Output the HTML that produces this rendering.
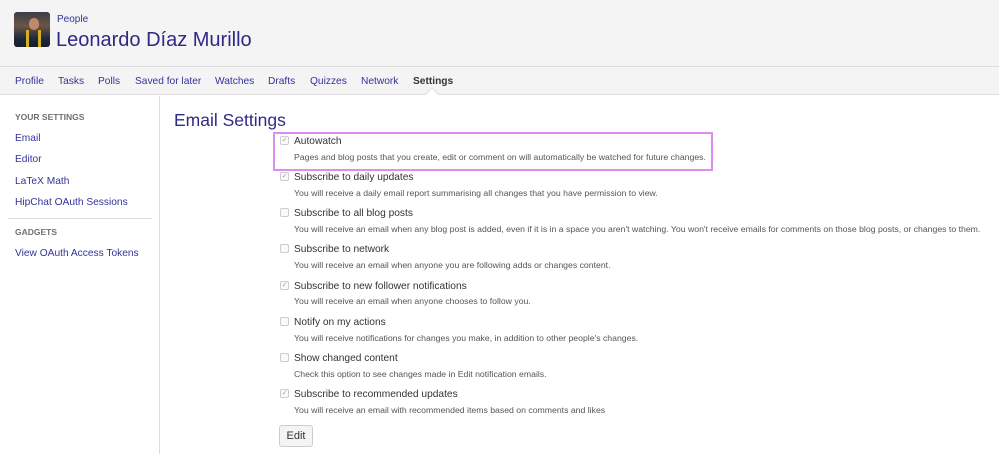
<!DOCTYPE html>
<html><head><meta charset="utf-8"><style>
*{margin:0;padding:0;box-sizing:border-box}
body{width:999px;height:454px;overflow:hidden;background:#fff;font-family:"Liberation Sans",Arial,sans-serif;position:relative}
.a{position:absolute;white-space:nowrap}
#hdr{position:absolute;left:0;top:0;width:999px;height:67px;background:#f4f4f4;border-bottom:1px solid #ddd}
#nav{position:absolute;left:0;top:67px;width:999px;height:28px;background:#f4f4f4;border-bottom:1px solid #ddd}
#nav span{position:absolute;top:9px;font-size:10.2px;color:#333399}
#side{position:absolute;left:0;top:96px;width:160px;height:358px;border-right:1px solid #ddd}
.sh{font-size:8.5px;font-weight:bold;color:#707070;left:15px}
.sl{font-size:10.2px;color:#333399;left:15px}
.lb{font-size:10.2px;color:#333;left:294px;margin-top:2px}
.ds{font-size:8.7px;color:#555;left:294px}
.cb{position:absolute;left:280px;width:9px;height:9px;border:1px solid #ccc;border-radius:2px;background:#fafafa;font-size:7px;color:#999;line-height:7px;text-align:center;margin-top:1px}
</style></head><body>
<div id="hdr"></div>
<div class="a" style="left:14px;top:12px;width:36px;height:35px;border-radius:3px;background:linear-gradient(180deg,#3a3f48 0%,#6b5446 40%,#1f2a3a 75%,#141d2c 100%)"></div>
<div class="a" style="left:29px;top:18px;width:10px;height:12px;border-radius:5px;background:#c08a6a"></div>
<div class="a" style="left:26px;top:30px;width:3px;height:17px;background:#d4b020"></div>
<div class="a" style="left:38px;top:30px;width:3px;height:17px;background:#d4b020"></div>
<div class="a" style="left:57px;top:14px;font-size:10px;color:#333399">People</div>
<div class="a" style="left:56px;top:29px;font-size:20px;color:#2d2a85">Leonardo Díaz Murillo</div>
<div id="nav">
<span style="left:15px">Profile</span><span style="left:58px">Tasks</span><span style="left:98px">Polls</span><span style="left:135px">Saved for later</span><span style="left:215px">Watches</span><span style="left:268px">Drafts</span><span style="left:310px">Quizzes</span><span style="left:361px">Network</span><span style="left:413px;color:#333;font-weight:bold">Settings</span>
<div class="a" style="left:427px;top:22px;width:10px;height:10px;background:#fff;border-left:1px solid #ddd;border-top:1px solid #ddd;transform:rotate(45deg)"></div>
</div>
<div id="side"></div>
<div class="a sh" style="top:112px">YOUR SETTINGS</div>
<div class="a sl" style="top:133px">Email</div>
<div class="a sl" style="top:154px">Editor</div>
<div class="a sl" style="top:176px">LaTeX Math</div>
<div class="a sl" style="top:197px">HipChat OAuth Sessions</div>
<div class="a" style="left:8px;top:218px;width:144px;height:1px;background:#ddd"></div>
<div class="a sh" style="top:227px">GADGETS</div>
<div class="a sl" style="top:248px">View OAuth Access Tokens</div>
<div class="a" style="left:174px;top:110px;font-size:17.5px;color:#2d2a85">Email Settings</div>
<div class="a" style="left:273px;top:132px;width:440px;height:39px;border:2px solid #d98ef0"></div>

<div class="cb" style="top:135px">✓</div><div class="a lb" style="top:134px">Autowatch</div>
<div class="a ds" style="top:152px">Pages and blog posts that you create, edit or comment on will automatically be watched for future changes.</div>
<div class="cb" style="top:171px">✓</div><div class="a lb" style="top:170px">Subscribe to daily updates</div>
<div class="a ds" style="top:188px">You will receive a daily email report summarising all changes that you have permission to view.</div>
<div class="cb" style="top:207px"></div><div class="a lb" style="top:206px">Subscribe to all blog posts</div>
<div class="a ds" style="top:224px">You will receive an email when any blog post is added, even if it is in a space you aren't watching. You won't receive emails for comments on those blog posts, or changes to them.</div>
<div class="cb" style="top:243px"></div><div class="a lb" style="top:242px">Subscribe to network</div>
<div class="a ds" style="top:260px">You will receive an email when anyone you are following adds or changes content.</div>
<div class="cb" style="top:280px">✓</div><div class="a lb" style="top:279px">Subscribe to new follower notifications</div>
<div class="a ds" style="top:296px">You will receive an email when anyone chooses to follow you.</div>
<div class="cb" style="top:316px"></div><div class="a lb" style="top:315px">Notify on my actions</div>
<div class="a ds" style="top:333px">You will receive notifications for changes you make, in addition to other people's changes.</div>
<div class="cb" style="top:352px"></div><div class="a lb" style="top:351px">Show changed content</div>
<div class="a ds" style="top:369px">Check this option to see changes made in Edit notification emails.</div>
<div class="cb" style="top:388px">✓</div><div class="a lb" style="top:387px">Subscribe to recommended updates</div>
<div class="a ds" style="top:405px">You will receive an email with recommended items based on comments and likes</div>
<div class="a" style="left:279px;top:425px;width:34px;height:22px;border:1px solid #ccc;border-radius:3px;background:#f4f4f4;font-size:11px;color:#333;text-align:center;line-height:20px">Edit</div>
</body></html>
